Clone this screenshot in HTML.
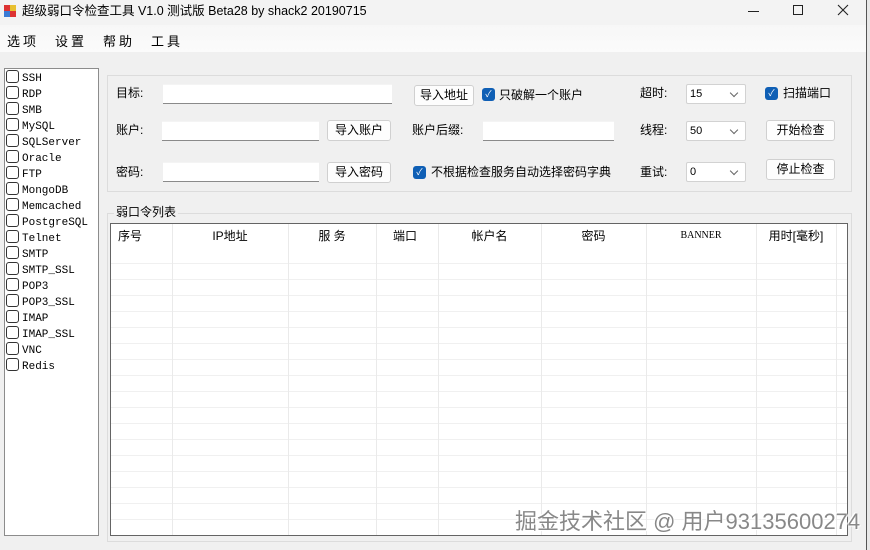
<!DOCTYPE html>
<html><head><meta charset="utf-8"><style>
*{box-sizing:border-box;margin:0;padding:0}
body{width:870px;height:550px;overflow:hidden;background:#f0f0f0;font-family:"Liberation Sans","Noto Sans CJK SC",sans-serif;font-size:12px;color:#000;position:relative}
.a{position:absolute;white-space:nowrap}
.t{font-size:12px;line-height:14px}
.inp{position:absolute;background:#fff;border-bottom:1px solid #8a8a8a;border-top:1px solid #f4f4f4}
.btn{position:absolute;background:#fdfdfd;border:1px solid #d0d0d0;border-radius:3px;text-align:center;font-size:12px;line-height:18px}
.cb{position:absolute;width:13px;height:13px;border-radius:3px;background:#0f5fb5;color:#fff;font-size:9px;line-height:13px;text-align:center}
.combo{position:absolute;background:#fff;border:1px solid #d2d2d2;border-radius:2px;height:20px;font-size:11px;line-height:18px;padding-left:3px}
.combo:after{content:"";position:absolute;right:8px;top:5px;width:5px;height:5px;border-right:1px solid #666;border-bottom:1px solid #666;transform:rotate(45deg)}
.li{position:absolute;left:6px;font-family:"Liberation Mono","Noto Serif CJK SC",monospace;font-size:11px;line-height:16px;height:16px}
.li i{display:inline-block;width:13px;height:13px;border:1px solid #333;border-radius:3px;vertical-align:-2px;margin-right:3px;background:#fff}
.col{position:absolute;top:224px;height:311px;border-left:1px solid #eaeaea}
.hd{position:absolute;top:224px;height:24px;line-height:24px;text-align:center;font-size:12px}
</style></head><body>
<div class="a" style="left:0;top:0;width:870px;height:25px;background:#f3f3f3"></div>
<div class="a" style="left:4px;top:5px;width:6px;height:6px;background:#d33"></div>
<div class="a" style="left:10px;top:5px;width:6px;height:6px;background:#e8c030"></div>
<div class="a" style="left:4px;top:11px;width:6px;height:6px;background:#3a7bd5"></div>
<div class="a" style="left:10px;top:11px;width:6px;height:6px;background:#d33"></div>
<div class="a" style="left:22px;top:3px;font-size:12.5px;line-height:17px">超级弱口令检查工具 V1.0 测试版 Beta28 by shack2 20190715</div>
<div class="a" style="left:748px;top:11px;width:11px;height:1px;background:#222"></div>
<div class="a" style="left:793px;top:5px;width:10px;height:10px;border:1px solid #222"></div>
<svg class="a" style="left:837px;top:4px" width="12" height="12"><path d="M1 1L11 11M11 1L1 11" stroke="#222" stroke-width="1.1"/></svg>
<div class="a" style="left:0;top:25px;width:866px;height:27px;background:linear-gradient(#f7f7f7,#fbfbfb)"></div>
<div class="a" style="left:7px;top:31px;font-size:13px;letter-spacing:3px">选项</div>
<div class="a" style="left:55px;top:31px;font-size:13px;letter-spacing:3px">设置</div>
<div class="a" style="left:103px;top:31px;font-size:13px;letter-spacing:3px">帮助</div>
<div class="a" style="left:151px;top:31px;font-size:13px;letter-spacing:3px">工具</div>
<div class="a" style="left:866px;top:0;width:4px;height:550px;background:#e8e8e8;border-left:1px solid #555"></div>
<div class="a" style="left:4px;top:68px;width:95px;height:468px;background:#fff;border:1px solid #8c8c8c"></div>
<div class="li" style="top:70px"><i></i>SSH</div>
<div class="li" style="top:86px"><i></i>RDP</div>
<div class="li" style="top:102px"><i></i>SMB</div>
<div class="li" style="top:118px"><i></i>MySQL</div>
<div class="li" style="top:134px"><i></i>SQLServer</div>
<div class="li" style="top:150px"><i></i>Oracle</div>
<div class="li" style="top:166px"><i></i>FTP</div>
<div class="li" style="top:182px"><i></i>MongoDB</div>
<div class="li" style="top:198px"><i></i>Memcached</div>
<div class="li" style="top:214px"><i></i>PostgreSQL</div>
<div class="li" style="top:230px"><i></i>Telnet</div>
<div class="li" style="top:246px"><i></i>SMTP</div>
<div class="li" style="top:262px"><i></i>SMTP_SSL</div>
<div class="li" style="top:278px"><i></i>POP3</div>
<div class="li" style="top:294px"><i></i>POP3_SSL</div>
<div class="li" style="top:310px"><i></i>IMAP</div>
<div class="li" style="top:326px"><i></i>IMAP_SSL</div>
<div class="li" style="top:342px"><i></i>VNC</div>
<div class="li" style="top:358px"><i></i>Redis</div>
<div class="a" style="left:107px;top:75px;width:745px;height:117px;border:1px solid #dcdcdc"></div>
<div class="a t" style="left:116px;top:86px">目标:</div>
<div class="inp" style="left:163px;top:84px;width:229px;height:20px"></div>
<div class="a t" style="left:116px;top:123px">账户:</div>
<div class="inp" style="left:162px;top:121px;width:157px;height:20px"></div>
<div class="btn" style="left:327px;top:120px;width:64px;height:21px">导入账户</div>
<div class="a t" style="left:116px;top:165px">密码:</div>
<div class="inp" style="left:163px;top:162px;width:156px;height:20px"></div>
<div class="btn" style="left:327px;top:162px;width:64px;height:21px">导入密码</div>
<div class="btn" style="left:414px;top:85px;width:60px;height:21px">导入地址</div>
<div class="cb" style="left:482px;top:88px">✓</div>
<div class="a t" style="left:499px;top:88px">只破解一个账户</div>
<div class="a t" style="left:412px;top:123px">账户后缀:</div>
<div class="inp" style="left:483px;top:121px;width:131px;height:20px"></div>
<div class="cb" style="left:413px;top:166px">✓</div>
<div class="a t" style="left:431px;top:165px">不根据检查服务自动选择密码字典</div>
<div class="a t" style="left:640px;top:86px">超时:</div>
<div class="combo" style="left:686px;top:84px;width:60px">15</div>
<div class="a t" style="left:640px;top:123px">线程:</div>
<div class="combo" style="left:686px;top:121px;width:60px">50</div>
<div class="a t" style="left:640px;top:165px">重试:</div>
<div class="combo" style="left:686px;top:162px;width:60px">0</div>
<div class="cb" style="left:765px;top:87px">✓</div>
<div class="a t" style="left:783px;top:86px">扫描端口</div>
<div class="btn" style="left:766px;top:120px;width:69px;height:21px">开始检查</div>
<div class="btn" style="left:766px;top:159px;width:69px;height:21px">停止检查</div>
<div class="a" style="left:107px;top:213px;width:745px;height:329px;border:1px solid #dcdcdc"></div>
<div class="a t" style="left:114px;top:205px;background:#f0f0f0;padding:0 2px">弱口令列表</div>
<div class="a" style="left:110px;top:223px;width:738px;height:313px;background:#fff;border:1px solid #646464;
background-image:repeating-linear-gradient(to bottom,transparent 0,transparent 15px,#f0f0f0 15px,#f0f0f0 16px);background-position:0 24px;background-size:100% 16px"></div>
<div class="a" style="left:111px;top:224px;width:736px;height:24px;background:#fff"></div>
<div class="col" style="left:172px"></div><div class="col" style="left:288px"></div><div class="col" style="left:376px"></div><div class="col" style="left:438px"></div><div class="col" style="left:541px"></div><div class="col" style="left:646px"></div><div class="col" style="left:756px"></div><div class="col" style="left:836px"></div>
<div class="hd" style="left:111px;width:61px;text-align:left;padding-left:7px">序号</div>
<div class="hd" style="left:172px;width:116px">IP地址</div>
<div class="hd" style="left:288px;width:88px">服 务</div>
<div class="hd" style="left:376px;width:62px;text-align:left;padding-left:17px">端口</div>
<div class="hd" style="left:438px;width:103px">帐户名</div>
<div class="hd" style="left:541px;width:105px">密码</div>
<div class="hd" style="left:646px;width:110px;font-family:'Liberation Serif',serif;font-size:10px">BANNER</div>
<div class="hd" style="left:756px;width:80px">用时[毫秒]</div>
<div class="a" style="left:515px;top:508px;font-size:22px;line-height:28px;color:#888;text-shadow:0 0 2px #fff,1px 1px 0 #fff,-1px -1px 0 #fff">掘金技术社区 @ 用户93135600274</div>
</body></html>
